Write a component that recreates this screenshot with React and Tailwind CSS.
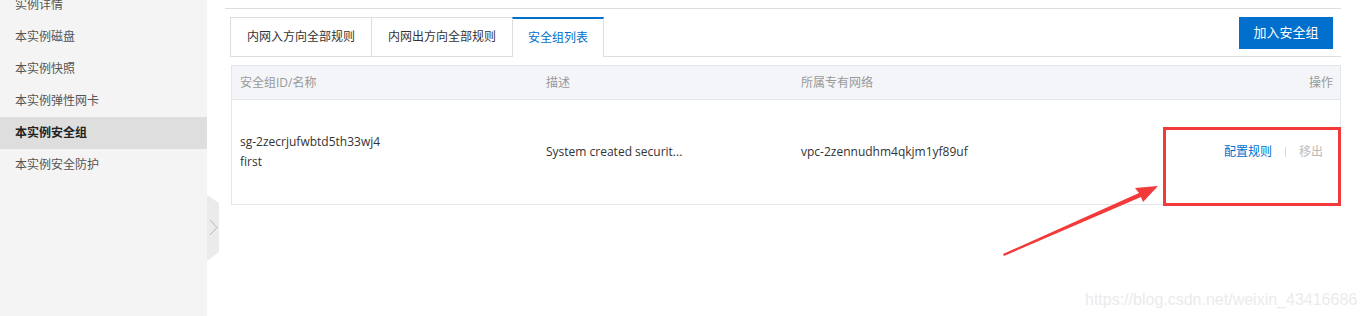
import React from 'react';

const menuItems = ['实例详情', '本实例磁盘', '本实例快照', '本实例弹性网卡', '本实例安全组', '本实例安全防护'];

const tabs = ['内网入方向全部规则', '内网出方向全部规则', '安全组列表'];

const font = { fontFamily: '"Open Sans", "Noto Sans CJK SC", sans-serif' };

const Sidebar = () => (
  <div className="w-[207px] shrink-0 h-full bg-[#f4f4f4]">
    <div className="mt-[-11px]">
      {menuItems.map((item, i) => (
        <div
          key={item}
          className={
            i === 4
              ? 'h-8 flex items-center pl-[15px] text-[12px] bg-[#dedede] text-[#222] font-bold'
              : 'h-8 flex items-center pl-[15px] text-[12px] text-[#555]'
          }
        >
          {item}
        </div>
      ))}
    </div>
  </div>
);

const CollapseTab = () => (
  <svg className="absolute left-[207px] top-[195px]" width="13" height="66" viewBox="0 0 13 66">
    <polygon points="0,0 12,8 12,57 0,66" fill="#ebebeb" />
    <polyline points="3,25 10,32.5 3,40" fill="none" stroke="#b5b5b5" strokeWidth="1" />
  </svg>
);

const Tabs = () => (
  <div className="flex justify-between h-[40px] border-b border-[#dddddd] mt-[8px] ml-[5px]">
    <div className="flex h-[39px]">
      {tabs.map((t, i) =>
        i === 2 ? (
          <div
            key={t}
            className="h-[40px] flex items-center px-[15px] bg-white border-x border-[#dddddd] border-t-2 border-t-[#0070cc] text-[12px] text-[#0070cc]"
          >
            {t}
          </div>
        ) : (
          <div
            key={t}
            className="h-[39px] flex items-center px-[16px] border-t border-l border-[#dddddd] text-[12px] text-[#333]"
          >
            {t}
          </div>
        )
      )}
    </div>
    <button className="w-[94px] h-[32px] mr-[8px] bg-[#0070cc] text-white text-[13px]">加入安全组</button>
  </div>
);

const Table = () => (
  <div className="mt-[8px] ml-[6px] border border-[#e3e6eb]">
    <div className="grid grid-cols-[306px_255px_1fr_220px] h-[34px] items-center bg-[#f4f5f8] border-b border-[#e3e6eb] text-[12px] text-[#999]">
      <div className="pl-[8px]">安全组ID/名称</div>
      <div className="pl-[8px]">描述</div>
      <div className="pl-[8px]">所属专有网络</div>
      <div className="text-right pr-[7px]">操作</div>
    </div>
    <div className="grid grid-cols-[306px_255px_1fr_220px] h-[104px] items-center text-[12px] text-[#333]">
      <div className="pl-[8px] leading-[20px]">
        <div>sg-2zecrjufwbtd5th33wj4</div>
        <div>first</div>
      </div>
      <div className="pl-[8px]">System created securit...</div>
      <div className="pl-[8px]">vpc-2zennudhm4qkjm1yf89uf</div>
      <div className="flex justify-end items-center pr-[17px]">
        <span className="text-[#0070cc]">配置规则</span>
        <span className="mx-[13px] w-px h-[10px] bg-[#dddddd]" />
        <span className="text-[#bbbbbb]">移出</span>
      </div>
    </div>
  </div>
);

const Annotation = () => (
  <>
    <div className="absolute left-[1163px] top-[127px] w-[178px] h-[79px] border-[3px] border-[#f33a3a]" />
    <svg className="absolute left-0 top-0 pointer-events-none" width="1365" height="316">
      <polygon points="1003,254 1139,193 1135,188 1158,186 1143,202 1141,197 1004,256" fill="#f33a3a" />
    </svg>
  </>
);

export default function App() {
  return (
    <div className="relative flex w-[1365px] h-[316px] overflow-hidden bg-white" style={font}>
      <Sidebar />
      <CollapseTab />
      <div className="flex-1 pl-[18px] pr-[24px]">
        <div className="h-[9px] border-b border-[#dddddd]" />
        <Tabs />
        <Table />
      </div>
      <Annotation />
      <div
        className="absolute left-[1085px] top-[288px] text-[16px] text-[#ebebeb]"
        style={{ fontFamily: '"Liberation Sans", Arial, sans-serif' }}
      >
        https://blog.csdn.net/weixin_43416686
      </div>
    </div>
  );
}
